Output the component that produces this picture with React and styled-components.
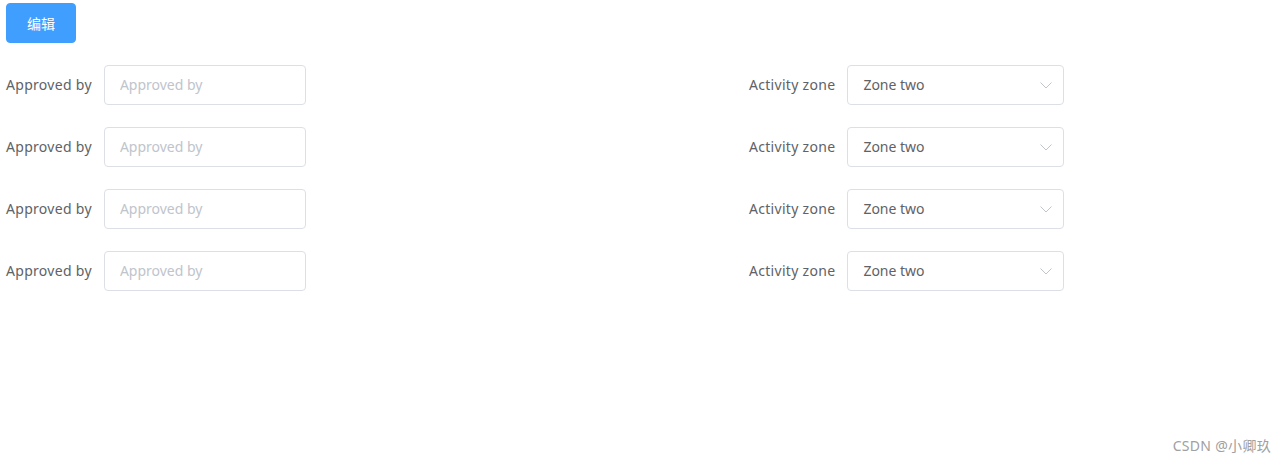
import styled, { createGlobalStyle } from "styled-components";

const GlobalStyle = createGlobalStyle`
    html, body {
        margin: 0;
        padding: 0;
        background: #fff;
    }
    body {
        font-family: "Noto Sans", "Noto Sans CJK SC", "Liberation Sans", sans-serif;
        font-size: 14px;
        color: #606266;
    }
`;

const Page = styled.div`
    position: relative;
    height: 463px;
    padding: 3px 0 0 6px;
    box-sizing: border-box;
`;

const Button = styled.button`
    display: block;
    width: 70px;
    height: 40px;
    border: 1px solid #409eff;
    border-radius: 4px;
    background: #409eff;
    color: #fff;
    font-family: "Noto Sans CJK SC", sans-serif;
    font-size: 14px;
    padding: 0;
    cursor: pointer;
`;

const Form = styled.form`
    display: flex;
    flex-direction: column;
    gap: 22px;
    margin-top: 22px;
`;

const Row = styled.div`
    display: grid;
    grid-template-columns: 743px auto;
    align-items: center;
`;

const Item = styled.div`
    display: flex;
    align-items: center;
`;

const Label = styled.label`
    padding-right: 12px;
    line-height: 40px;
    color: #606266;
    letter-spacing: 0.3px;
    white-space: nowrap;
`;

const Input = styled.input`
    box-sizing: border-box;
    width: ${(p) => p.$width}px;
    height: 40px;
    padding: 0 15px 2px;
    border: 1px solid #dcdfe6;
    border-radius: 4px;
    font-family: inherit;
    font-size: 14px;
    color: #606266;
    outline: none;
    &::placeholder {
        color: #c0c4cc;
    }
`;

const SelectBox = styled.div`
    position: relative;
    box-sizing: border-box;
    width: 217px;
    height: 40px;
    padding: 0 15px 2px;
    border: 1px solid #dcdfe6;
    border-radius: 4px;
    display: flex;
    align-items: center;
    color: #606266;
`;

const Arrow = styled.svg`
    position: absolute;
    right: 11px;
    top: 16px;
    width: 12px;
    height: 7px;
`;

const Watermark = styled.div`
    position: absolute;
    right: 16px;
    bottom: 8px;
    font-family: "Noto Sans", "Noto Sans CJK SC", sans-serif;
    font-size: 14px;
    letter-spacing: 0.3px;
    color: #a0a0a0;
`;

const rows = [0, 1, 2, 3];

export default function App() {
    return (
        <Page>
            <GlobalStyle />
            <Button type="button">编辑</Button>
            <Form>
                {rows.map((i) => (
                    <Row key={i}>
                        <Item>
                            <Label>Approved by</Label>
                            <Input $width={202} placeholder="Approved by" />
                        </Item>
                        <Item>
                            <Label>Activity zone</Label>
                            <SelectBox>
                                Zone two
                                <Arrow viewBox="0 0 12 7" fill="none">
                                    <path d="M0.5 0.5 L6 6 L11.5 0.5" stroke="#c0c4cc" strokeWidth="1" />
                                </Arrow>
                            </SelectBox>
                        </Item>
                    </Row>
                ))}
            </Form>
            <Watermark>CSDN @小卿玖</Watermark>
        </Page>
    );
}
